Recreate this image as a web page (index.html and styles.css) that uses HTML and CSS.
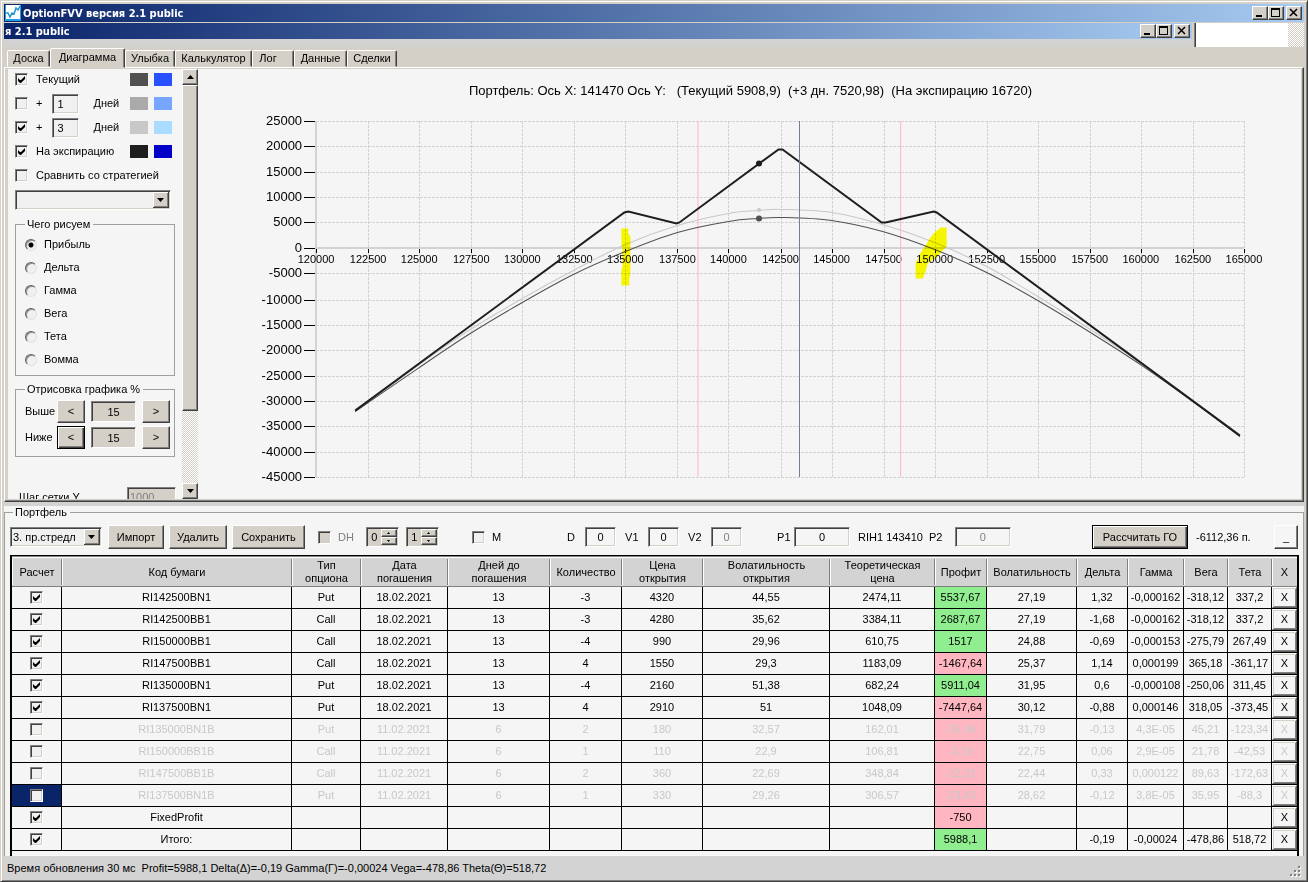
FILE: index.html
```html
<!DOCTYPE html>
<html lang="ru">
<head>
    <meta charset="UTF-8">
    <meta name="viewport" content="width=device-width, initial-scale=1.0">
    <title>OptionFVV версия 2.1 public</title>
    <link rel="stylesheet" href="styles.css">
</head>
<body>
    <div class="window">
        <header class="title-bar">
            <svg class="app-icon" width="16" height="16" viewBox="0 0 16 16">
                <rect width="16" height="16" fill="#1ea0e6"/>
                <rect x="1" y="0" width="14" height="14" fill="#fff"/>
                <path d="M1 8h2l2 4 2-4 2 1 2-6 2 2 2-4" fill="none" stroke="#1e96d2" stroke-width="1.5"/>
            </svg>
            <h1 class="title">OptionFVV версия 2.1 public</h1>
            <div class="win-buttons">
                <button class="win-btn" aria-label="Свернуть"><svg width="12" height="10" viewBox="0 0 12 10"><path d="M2 7h6v2H2z"/></svg></button>
                <button class="win-btn" aria-label="Развернуть"><svg width="12" height="10" viewBox="0 0 12 10"><path d="M1 0h9v9H1zM2 2v6h7V2z" fill-rule="evenodd"/></svg></button>
                <button class="win-btn close" aria-label="Закрыть"><svg width="12" height="10" viewBox="0 0 12 10"><path d="M2 1l7 7M9 1L2 8" stroke="#000" stroke-width="1.5"/></svg></button>
            </div>
        </header>

        <div class="back-window">
            <div class="back-left">
                <div class="title-bar small">
                    <span class="title">я 2.1 public</span>
                    <div class="win-buttons">
                        <button class="win-btn" aria-label="Свернуть"><svg width="12" height="10" viewBox="0 0 12 10"><path d="M2 7h6v2H2z"/></svg></button>
                        <button class="win-btn" aria-label="Развернуть"><svg width="12" height="10" viewBox="0 0 12 10"><path d="M1 0h9v9H1zM2 2v6h7V2z" fill-rule="evenodd"/></svg></button>
                        <button class="win-btn close" aria-label="Закрыть"><svg width="12" height="10" viewBox="0 0 12 10"><path d="M2 1l7 7M9 1L2 8" stroke="#000" stroke-width="1.5"/></svg></button>
                    </div>
                </div>
            </div>
            <div class="back-edge"></div>
            <div class="back-page"></div>
            <div class="back-scroll hatch"></div>
        </div>

        <nav class="tabs">
            <button class="tab tab-board">Доска</button>
            <button class="tab tab-chart active">Диаграмма</button>
            <button class="tab tab-smile">Улыбка</button>
            <button class="tab tab-calc">Калькулятор</button>
            <button class="tab tab-log">Лог</button>
            <button class="tab tab-data">Данные</button>
            <button class="tab tab-deals">Сделки</button>
        </nav>

        <main class="tab-page">
            <aside class="settings">
                <div class="lines">
                    <div class="line">
                        <input type="checkbox" id="showNow" checked>
                        <label class="grow" for="showNow">Текущий</label>
                        <span class="swatch now-1"></span><span class="swatch now-2"></span>
                    </div>
                    <div class="line">
                        <input type="checkbox" id="showPlus1">
                        <label for="showPlus1">+</label>
                        <input class="edit days" type="text" id="plus1" value="1">
                        <label class="grow" for="plus1">Дней</label>
                        <span class="swatch one-1"></span><span class="swatch one-2"></span>
                    </div>
                    <div class="line">
                        <input type="checkbox" id="showPlus3" checked>
                        <label for="showPlus3">+</label>
                        <input class="edit days" type="text" id="plus3" value="3">
                        <label class="grow" for="plus3">Дней</label>
                        <span class="swatch three-1"></span><span class="swatch three-2"></span>
                    </div>
                    <div class="line">
                        <input type="checkbox" id="showExp" checked>
                        <label class="grow" for="showExp">На экспирацию</label>
                        <span class="swatch exp-1"></span><span class="swatch exp-2"></span>
                    </div>
                    <div class="line">
                        <input type="checkbox" id="compare">
                        <label for="compare">Сравнить со стратегией</label>
                    </div>
                    <select class="combo" aria-label="Стратегия"><option></option></select>
                </div>

                <fieldset class="group kinds">
                    <legend>Чего рисуем</legend>
                    <label class="kind"><input type="radio" name="kind" checked>Прибыль</label>
                    <label class="kind"><input type="radio" name="kind">Дельта</label>
                    <label class="kind"><input type="radio" name="kind">Гамма</label>
                    <label class="kind"><input type="radio" name="kind">Вега</label>
                    <label class="kind"><input type="radio" name="kind">Тета</label>
                    <label class="kind"><input type="radio" name="kind">Вомма</label>
                </fieldset>

                <fieldset class="group range">
                    <legend>Отрисовка графика %</legend>
                    <div class="range-row">
                        <label for="above">Выше</label>
                        <button class="btn">&lt;</button>
                        <input class="edit grey" type="text" id="above" value="15">
                        <button class="btn">&gt;</button>
                    </div>
                    <div class="range-row">
                        <label for="below">Ниже</label>
                        <button class="btn default">&lt;</button>
                        <input class="edit grey" type="text" id="below" value="15">
                        <button class="btn">&gt;</button>
                    </div>
                </fieldset>

                <div class="grid-step">
                    <label for="stepY">Шаг сетки Y</label>
                    <input class="edit grey" type="text" id="stepY" value="1000" disabled>
                </div>
            </aside>
            <div class="scroll hatch">
                <button class="btn scroll-btn" aria-label="Вверх"><svg width="7" height="4" viewBox="0 0 7 4"><path d="M0 4h7L3.5 0z"/></svg></button>
                <div class="thumb"></div>
                <div class="track"></div>
                <button class="btn scroll-btn" aria-label="Вниз"><svg width="7" height="4" viewBox="0 0 7 4"><path d="M0 0h7L3.5 4z"/></svg></button>
            </div>
            <div class="chart-box">
                <svg class="chart" id="chart" viewBox="0 0 1102 429"></svg>
            </div>
        </main>

        <section class="portfolio">
            <fieldset class="group portfolio-group">
                <legend>Портфель</legend>
                <div class="toolbar">
                    <select class="combo strategy" aria-label="Портфель"><option>3. пр.стредл</option></select>
                    <button class="btn import">Импорт</button>
                    <button class="btn remove">Удалить</button>
                    <button class="btn save">Сохранить</button>
                    <label class="tick dh"><input class="grey" type="checkbox" disabled>DH</label>
                    <span class="edit grey spin">
                        <input type="text" value="0" aria-label="DH 1">
                        <span class="spin-buttons">
                            <button class="btn" aria-label="Больше"><svg width="3" height="2" viewBox="0 0 3 2"><path d="M0 2h3L1.5 0z"/></svg></button>
                            <button class="btn" aria-label="Меньше"><svg width="3" height="2" viewBox="0 0 3 2"><path d="M0 0h3L1.5 2z"/></svg></button>
                        </span>
                    </span>
                    <span class="edit grey spin">
                        <input type="text" value="1" aria-label="DH 2">
                        <span class="spin-buttons">
                            <button class="btn" aria-label="Больше"><svg width="3" height="2" viewBox="0 0 3 2"><path d="M0 2h3L1.5 0z"/></svg></button>
                            <button class="btn" aria-label="Меньше"><svg width="3" height="2" viewBox="0 0 3 2"><path d="M0 0h3L1.5 2z"/></svg></button>
                        </span>
                    </span>
                    <label class="tick m"><input type="checkbox">M</label>
                    <label class="field-label first" for="fieldD">D</label>
                    <input class="edit num" type="text" id="fieldD" value="0">
                    <label class="field-label" for="fieldV1">V1</label>
                    <input class="edit num" type="text" id="fieldV1" value="0">
                    <label class="field-label" for="fieldV2">V2</label>
                    <input class="edit num" type="text" id="fieldV2" value="0" disabled>
                    <label class="field-label p1" for="fieldP1">P1</label>
                    <input class="edit num wide" type="text" id="fieldP1" value="0">
                    <span class="ticker">RIH1 143410</span>
                    <label class="field-label p2" for="fieldP2">P2</label>
                    <input class="edit num wide" type="text" id="fieldP2" value="0" disabled>
                    <button class="btn default calc">Рассчитать ГО</button>
                    <span class="margin-sum">-6112,36 п.</span>
                    <button class="btn light collapse">_</button>
                </div>

                <div class="grid">
                    <table>
                        <colgroup>
                            <col class="c-check"><col class="c-code"><col class="c-type"><col class="c-date">
                            <col class="c-days"><col class="c-qty"><col class="c-open"><col class="c-vopen">
                            <col class="c-theor"><col class="c-profit"><col class="c-vol"><col class="c-delta">
                            <col class="c-gamma"><col class="c-vega"><col class="c-theta"><col class="c-del">
                        </colgroup>
                        <thead>
                            <tr>
                                <th>Расчет</th>
                                <th>Код бумаги</th>
                                <th>Тип опциона</th>
                                <th>Дата погашения</th>
                                <th>Дней до погашения</th>
                                <th>Количество</th>
                                <th>Цена открытия</th>
                                <th>Волатильность открытия</th>
                                <th>Теоретическая цена</th>
                                <th>Профит</th>
                                <th>Волатильность</th>
                                <th>Дельта</th>
                                <th>Гамма</th>
                                <th>Вега</th>
                                <th>Тета</th>
                                <th>X</th>
                            </tr>
                        </thead>
                        <tbody id="positions"></tbody>
                    </table>
                </div>
            </fieldset>
        </section>

        <footer class="status">
            <span>Время обновления 30 мс&nbsp; Profit=5988,1 Delta(Δ)=-0,19 Gamma(Г)=-0,00024 Vega=-478,86 Theta(Θ)=518,72</span>
            <svg class="grip" width="12" height="12" viewBox="0 0 12 12">
                <path fill="#fff" d="M9 1h2v2H9zM5 5h2v2H5zM9 5h2v2H9zM1 9h2v2H1zM5 9h2v2H5zM9 9h2v2H9z"/>
                <path fill="#808080" d="M8 0h2v2H8zM4 4h2v2H4zM8 4h2v2H8zM0 8h2v2H0zM4 8h2v2H4zM8 8h2v2H8z"/>
            </svg>
        </footer>
    </div>

    <script src="script.js"></script>
</body>
</html>
```

FILE: styles.css
```css
* {
    box-sizing: border-box;
}
body {
    margin: 0;
    font-family: "Liberation Sans", Arial, sans-serif;
    font-size: 11px;
    line-height: 13px;
    color: #000;
    background-color: #d4d0c8;
}
button, input, select {
    margin: 0;
    padding: 0;
    font: inherit;
    color: inherit;
    border-radius: 0;
}
.window {
    display: flex;
    flex-direction: column;
    min-height: 100vh;
    padding: 3px 3px 1px;
    border: 1px solid;
    border-color: #d4d0c8 #404040 #404040 #d4d0c8;
    box-shadow: inset 1px 1px #fff, inset -1px -1px #808080;
}

/* title bars */
.title-bar {
    display: flex;
    align-items: center;
    height: 18px;
    padding: 0 2px 0 1px;
    background: linear-gradient(to right, #0a246a, #a6caf0);
    color: #fff;
}
.title-bar.small {
    height: 16px;
    padding-left: 0;
}
.title {
    flex: 1;
    margin: 0 0 0 2px;
    font-size: 11px;
    font-weight: bold;
    font-family: "DejaVu Sans Condensed", "Liberation Sans", sans-serif;
}
.small .title {
    margin-left: 1px;
}
.win-buttons {
    display: flex;
}
.win-btn {
    width: 16px;
    height: 14px;
    line-height: 0;
    background-color: #d4d0c8;
    border: 1px solid;
    border-color: #fff #404040 #404040 #fff;
    box-shadow: inset -1px -1px #808080;
}
.win-btn.close {
    margin-left: 2px;
}

/* strip of the window behind */
.back-window {
    display: flex;
    height: 25px;
    padding-top: 1px;
}
.back-left {
    flex: 1;
    background-color: #d3d3d3;
}
.back-edge {
    width: 4px;
    border-right: 1px solid #404040;
    box-shadow: inset -1px 0 #808080;
}
.back-page {
    width: 92px;
    background-color: #fff;
}
.back-scroll {
    width: 16px;
}
.hatch {
    background: repeating-conic-gradient(#fff 0 25%, #d4d0c8 0 50%) 0 0 / 2px 2px;
}

/* tabs */
.tabs {
    display: flex;
    align-items: flex-end;
    height: 20px;
    padding: 1px 0 0 3px;
}
.tab {
    height: 17px;
    background-color: #d4d0c8;
    border: 1px solid;
    border-color: #fff #404040 transparent #fff;
    border-radius: 2px 2px 0 0;
    box-shadow: inset -1px 0 #808080;
    white-space: nowrap;
}
.tab.active {
    height: 20px;
    margin-bottom: -1px;
    padding-bottom: 2px;
    z-index: 1;
}
.tab-board { width: 43px; }
.tab-chart { width: 75px; }
.tab-smile { width: 50px; }
.tab-calc { width: 77px; }
.tab-log { width: 42px; padding-right: 10px; }
.tab-data { width: 53px; }
.tab-deals { width: 50px; }

.tab-page {
    flex: 1 1 0;
    display: flex;
    min-height: 300px;
    padding: 1px 2px 2px 3px;
    border: 1px solid;
    border-color: #fff #404040 #404040 #fff;
    box-shadow: inset -1px -1px #808080;
    overflow: hidden;
}

/* shared controls */
.edit {
    background-color: #f5f5f5;
    border: 1px solid;
    border-color: #808080 #fff #fff #808080;
    box-shadow: inset 1px 1px #404040, inset -1px -1px #d4d0c8;
}
.edit.grey {
    background-color: #d4d0c8;
    text-align: center;
}
input:disabled {
    color: #808080;
}
.btn {
    background-color: #d4d0c8;
    border: 1px solid;
    border-color: #fff #404040 #404040 #fff;
    box-shadow: inset -1px -1px #808080;
}
.btn.default {
    border-color: #000;
    box-shadow: inset 1px 1px #fff, inset -1px -1px #404040, inset -2px -2px #808080;
}
.btn.light {
    background-color: #f5f5f5;
}
input[type="checkbox"] {
    appearance: none;
    flex: none;
    width: 13px;
    height: 13px;
    background-color: #f0f0f0;
    border: 1px solid;
    border-color: #808080 #fff #fff #808080;
    box-shadow: inset 1px 1px #404040, inset -1px -1px #d4d0c8;
}
input[type="checkbox"]:checked {
    background-image: url("data:image/svg+xml,%3Csvg xmlns='http://www.w3.org/2000/svg' width='11' height='11'%3E%3Cpath d='M2 4v3l2 2h1l4-4V2L5 6H4z'/%3E%3C/svg%3E");
}
input[type="checkbox"].grey {
    background-color: #d4d0c8;
}
input[type="radio"] {
    appearance: none;
    width: 12px;
    height: 12px;
    background-color: #f0f0f0;
    border: 1px solid;
    border-color: #606060 #e4e2de #e4e2de #606060;
    border-radius: 50%;
    box-shadow: inset 1px 1px #909090;
}
input[type="radio"]:checked {
    background-image: radial-gradient(circle, #000 2px, transparent 3px);
}
.combo {
    appearance: none;
    height: 20px;
    padding-left: 2px;
    border: 1px solid;
    border-color: #808080 #fff #fff #808080;
    box-shadow: inset 1px 1px #404040, inset -1px -1px #d4d0c8;
    background: #f0f0f0 url("data:image/svg+xml,%3Csvg xmlns='http://www.w3.org/2000/svg' width='16' height='16'%3E%3Cpath fill='%23404040' d='M0 0h16v16H0z'/%3E%3Cpath fill='%23fff' d='M0 0h15v15H0z'/%3E%3Cpath fill='%23808080' d='M1 1h14v14H1z'/%3E%3Cpath fill='%23d4d0c8' d='M1 1h13v13H1z'/%3E%3Cpath d='M4 6h7l-3.500 4z'/%3E%3C/svg%3E") right 1px center no-repeat;
}
.group {
    min-width: 0;
    margin: 0;
    border: 1px solid #a0a0a0;
}
.group legend {
    padding: 0 3px 0 2px;
    line-height: 12px;
}

/* left settings */
.settings {
    flex: none;
    width: 174px;
    padding: 1px 6px 0 7px;
    background-color: #f5f5f5;
    overflow: hidden;
}
.lines {
    display: flex;
    flex-direction: column;
    gap: 5px;
}
.line {
    display: flex;
    align-items: center;
    height: 19px;
    padding-right: 4px;
}
.line input[type="checkbox"] {
    margin-right: 8px;
}
.line .grow {
    flex: 1;
}
.days {
    width: 27px;
    height: 20px;
    margin: 0 14px 0 10px;
    padding-left: 4px;
    background-color: #f0f0f0;
}
.swatch {
    width: 18px;
    height: 13px;
    margin-left: 6px;
}
.now-1 { background-color: #505050; }
.now-2 { background-color: #2850ff; }
.one-1 { background-color: #aaaaaa; }
.one-2 { background-color: #78a5ff; }
.three-1 { background-color: #c8c8c8; }
.three-2 { background-color: #aadcff; }
.exp-1 { background-color: #1e1e1e; }
.exp-2 { background-color: #0000c8; }
.lines .combo {
    width: 156px;
}
.settings .group {
    width: 160px;
}
.settings .kinds {
    margin-top: 8px;
    padding: 3px 0 4px 9px;
}
.kind {
    display: flex;
    align-items: center;
    gap: 7px;
    height: 23px;
}
.settings .range {
    margin-top: 7px;
    padding: 5px 0 7px 9px;
}
.range-row {
    display: flex;
    align-items: center;
}
.range-row + .range-row {
    margin-top: 3px;
}
.range-row label {
    width: 32px;
}
.range-row .btn {
    width: 28px;
    height: 23px;
}
.range-row .edit {
    width: 45px;
    height: 21px;
    margin: 0 6px;
}
.grid-step {
    display: flex;
    justify-content: space-between;
    align-items: center;
    margin-top: 30px;
    padding-left: 4px;
}
.grid-step .edit {
    width: 49px;
    height: 20px;
    padding-left: 2px;
    text-align: left;
}
.scroll {
    flex: none;
    display: flex;
    flex-direction: column;
    width: 16px;
}
.scroll-btn {
    height: 16px;
    line-height: 0;
}
.thumb {
    flex: 9;
    background-color: #d4d0c8;
    border: 1px solid;
    border-color: #fff #404040 #404040 #fff;
    box-shadow: inset -1px -1px #808080;
}
.track {
    flex: 2;
}

/* chart */
.chart-box {
    flex: 1;
    min-width: 0;
    background-color: #f5f5f5;
}
.chart {
    display: block;
    width: 100%;
    height: 100%;
}
.chart .title-text {
    font-size: 13px;
    text-anchor: middle;
    white-space: pre;
}
.chart .y-label {
    font-size: 13px;
    text-anchor: end;
}
.chart .x-label {
    font-size: 11px;
    text-anchor: middle;
}
.chart .grid-line {
    stroke: #d3d3d3;
    stroke-dasharray: 3 1;
    shape-rendering: crispEdges;
}
.chart .axis {
    stroke: #d3d3d3;
    stroke-width: 2;
    shape-rendering: crispEdges;
}
.chart .tick-mark {
    stroke: #000;
    shape-rendering: crispEdges;
}
.chart .bound {
    stroke: #ffb6c1;
}
.chart .price {
    stroke: #708090;
    shape-rendering: crispEdges;
}
.chart path {
    fill: none;
}
.chart .marker {
    fill: #ff0;
    mix-blend-mode: multiply;
}

/* portfolio */
.portfolio {
    margin-top: 4px;
    background-color: #f5f5f5;
    box-shadow: 0 -4px #d3d3d3;
}
.portfolio-group {
    padding: 0 4px 5px 5px;
    border-bottom: none;
}
.portfolio-group legend {
    margin-left: 3px;
}
.toolbar {
    display: flex;
    align-items: center;
    height: 37px;
    padding: 1px 1px 0 0;
}
.toolbar > * {
    flex: none;
}
.toolbar .btn {
    height: 24px;
}
.strategy {
    width: 92px;
}
.import {
    width: 56px;
    margin-left: 6px;
}
.remove {
    width: 58px;
    margin-left: 5px;
}
.save {
    width: 73px;
    margin-left: 5px;
}
.tick {
    display: flex;
    align-items: center;
    gap: 7px;
}
.dh {
    margin-left: 13px;
    color: #808080;
}
.spin {
    display: flex;
    width: 33px;
    height: 20px;
    margin-left: 7px;
    padding: 1px;
}
.dh + .spin {
    margin-left: 12px;
}
.spin input {
    width: 13px;
    background: none;
    border: none;
    text-align: center;
}
.spin-buttons {
    flex: 1;
    display: flex;
    flex-direction: column;
}
.spin .spin-buttons .btn {
    display: flex;
    align-items: center;
    justify-content: center;
    height: 8px;
}
.m {
    margin-left: 33px;
}
.field-label {
    width: 23px;
    margin-left: 9px;
}
.field-label.first {
    width: 18px;
    margin-left: 66px;
}
.field-label.p1 {
    width: 17px;
    margin-left: 35px;
}
.field-label.p2 {
    width: 26px;
    margin-left: 6px;
}
.num {
    width: 31px;
    height: 20px;
    text-align: center;
}
.num.wide {
    width: 56px;
}
.ticker {
    margin-left: 8px;
}
.calc {
    width: 96px;
    margin-left: auto;
}
.margin-sum {
    width: 86px;
    padding-left: 8px;
}
.collapse {
    width: 24px;
}

/* positions table */
.grid {
    border: solid #000;
    border-width: 1px 2px 0;
    padding-bottom: 5px;
    margin-bottom: -5px;
}
table {
    width: 100%;
    table-layout: fixed;
    border-spacing: 0;
    border-top: 1px solid #808080;
}
.c-check { width: 50px; }
.c-type { width: 69px; }
.c-date { width: 87px; }
.c-days { width: 102px; }
.c-qty { width: 72px; }
.c-open { width: 81px; }
.c-vopen { width: 127px; }
.c-theor { width: 105px; }
.c-profit { width: 52px; }
.c-vol { width: 90px; }
.c-delta { width: 51px; }
.c-gamma { width: 56px; }
.c-vega { width: 44px; }
.c-theta { width: 44px; }
.c-del { width: 25px; }
th {
    height: 30px;
    padding: 0 6px;
    font-weight: normal;
    background:
        linear-gradient(#fff, #fff) left center / 1px 26px no-repeat,
        linear-gradient(#808080, #808080) right center / 1px 26px no-repeat,
        #d3d3d3;
    border-top: 1px solid #fff;
    border-bottom: 1px solid #808080;
}
th:nth-child(1), th:nth-child(6), th:nth-child(n+10) {
    padding: 0;
}
th:last-child {
    background: linear-gradient(#fff, #fff) left center / 1px 26px no-repeat, #d3d3d3;
}
td {
    height: 22px;
    padding: 0;
    text-align: center;
    white-space: nowrap;
    border-right: 1px solid #000;
    border-bottom: 1px solid #000;
}
td input[type="checkbox"] {
    display: block;
    margin: 0 auto;
}
td .btn {
    display: block;
    width: 100%;
    height: 21px;
    background-color: #f5f5f5;
    border-color: #fff #606060 #606060 #fff;
    box-shadow: inset 1px 1px #d4d0c8, inset -1px -1px #808080;
}
td:last-child {
    border-right: none;
}
.off {
    color: #c8c8c8;
}
.plus {
    background-color: #90ee90;
}
.minus {
    background-color: #ffb6c1;
}
.selected {
    background-color: #0a246a;
}

.status {
    display: flex;
    align-items: center;
    justify-content: space-between;
    height: 24px;
    padding: 0 2px 0 3px;
    background-color: #d3d3d3;
    z-index: 1;
}
.grip {
    align-self: flex-end;
    margin-bottom: 2px;
}
```

FILE: script.js
```js
// Positions: on, code, type, date, days, qty, open, vol open, theor, profit, vol, delta, gamma, vega, theta
const positions = [
    [1, 'RI142500BN1', 'Put', '18.02.2021', '13', '-3', '4320', '44,55', '2474,11', '5537,67', '27,19', '1,32', '-0,000162', '-318,12', '337,2'],
    [1, 'RI142500BB1', 'Call', '18.02.2021', '13', '-3', '4280', '35,62', '3384,11', '2687,67', '27,19', '-1,68', '-0,000162', '-318,12', '337,2'],
    [1, 'RI150000BB1', 'Call', '18.02.2021', '13', '-4', '990', '29,96', '610,75', '1517', '24,88', '-0,69', '-0,000153', '-275,79', '267,49'],
    [1, 'RI147500BB1', 'Call', '18.02.2021', '13', '4', '1550', '29,3', '1183,09', '-1467,64', '25,37', '1,14', '0,000199', '365,18', '-361,17'],
    [1, 'RI135000BN1', 'Put', '18.02.2021', '13', '-4', '2160', '51,38', '682,24', '5911,04', '31,95', '0,6', '-0,000108', '-250,06', '311,45'],
    [1, 'RI137500BN1', 'Put', '18.02.2021', '13', '4', '2910', '51', '1048,09', '-7447,64', '30,12', '-0,88', '0,000146', '318,05', '-373,45'],
    [0, 'RI135000BN1B', 'Put', '11.02.2021', '6', '2', '180', '32,57', '162,01', '-35,98', '31,79', '-0,13', '4,3E-05', '45,21', '-123,34'],
    [0, 'RI150000BB1B', 'Call', '11.02.2021', '6', '1', '110', '22,9', '106,81', '-3,19', '22,75', '0,06', '2,9E-05', '21,78', '-42,53'],
    [0, 'RI147500BB1B', 'Call', '11.02.2021', '6', '2', '360', '22,69', '348,84', '-22,32', '22,44', '0,33', '0,000122', '89,63', '-172,63'],
    [0, 'RI137500BN1B', 'Put', '11.02.2021', '6', '1', '330', '29,26', '306,57', '-23,43', '28,62', '-0,12', '3,8E-05', '35,95', '-88,3'],
    [1, 'FixedProfit', '', '', '', '', '', '', '', '-750', '', '', '', '', ''],
    [1, 'Итого:', '', '', '', '', '', '', '', '5988,1', '', '-0,19', '-0,00024', '-478,86', '518,72']
];
const selectedRow = 9;
const profitColumn = 9;

function loadPositions() {
    let html = '';
    positions.forEach((item, n) => {
        const on = item[0];
        html += `<tr class="${on ? '' : 'off'}">`;
        html += `<td class="${n === selectedRow ? 'selected' : ''}"><input type="checkbox" aria-label="${item[1]}" ${on ? 'checked' : ''}></td>`;
        for (let i = 1; i < item.length; i++) {
            let cls = '';
            if (i === profitColumn) {
                cls = item[i].startsWith('-') ? 'minus' : 'plus';
            }
            html += `<td class="${cls}">${item[i]}</td>`;
        }
        html += '<td><button class="btn">X</button></td></tr>';
    });
    document.getElementById('positions').innerHTML = html;
}

// Plot area
const left = 118, right = 1045, top0 = 52, bottom = 407;
const px = v => Math.round(left + (v - 120000) * (right - left) / 45000);
const py = v => Math.round(top0 + (25000 - v) * (bottom - top0) / 70000);

const nowLine = [[157, 342], [221, 298], [272, 264], [324, 233], [375, 205], [427, 182], [479, 163], [530, 152], [560, 149], [583, 148],
    [633, 151], [684, 162], [736, 180], [788, 203], [839, 231], [890, 262], [943, 296], [994, 332], [1041, 367]];
const plusLine = [[157, 342], [221, 295], [272, 260], [324, 229], [375, 201], [427, 175], [479, 156], [530, 144], [560, 141], [583, 140],
    [633, 143], [684, 155], [736, 173], [788, 197], [839, 227], [890, 259], [943, 294], [994, 331], [1041, 367]];
const expLine = [[157, 341], [426, 143], [430, 142], [478, 154], [481, 153], [580, 80], [584, 80], [683, 153], [687, 153], [735, 142], [738, 143], [1041, 366]];

// Smooth line through the points
function curve(p) {
    let d = `M${p[0]}`;
    for (let i = 0; i < p.length - 1; i++) {
        const a = p[i - 1] || p[i], b = p[i], c = p[i + 1], e = p[i + 2] || c;
        d += `C${b[0] + (c[0] - a[0]) / 6} ${b[1] + (c[1] - a[1]) / 6} ${c[0] - (e[0] - b[0]) / 6} ${c[1] - (e[1] - b[1]) / 6} ${c}`;
    }
    return d;
}

function line(cls, x1, y1, x2, y2) {
    return `<line class="${cls}" x1="${x1}" y1="${y1}" x2="${x2}" y2="${y2}"/>`;
}

function drawChart() {
    let s = '<text class="title-text" x="552" y="26">Портфель: Ось X: 141470 Ось Y:   (Текущий 5908,9)  (+3 дн. 7520,98)  (На экспирацию 16720)</text>';
    for (let v = 25000; v >= -45000; v -= 5000) {
        const y = py(v) + 0.5;
        s += line('grid-line', left, y, right, y);
        s += line('tick-mark', 106, y, 117, y);
        s += `<text class="y-label" x="104" y="${py(v) + 4}">${v}</text>`;
    }
    for (let v = 120000; v <= 165000; v += 2500) {
        const x = px(v) + 0.5;
        s += line('grid-line', x, top0, x, bottom);
    }
    s += line('axis', left, top0, left, bottom);
    s += line('axis', left, py(0), right, py(0));
    for (let v = 120000; v <= 165000; v += 2500) {
        const x = px(v);
        s += line('tick-mark', x + 0.5, py(0) + 1, x + 0.5, py(0) + 5);
        s += `<text class="x-label" x="${x}" y="194">${v}</text>`;
    }
    s += line('bound', 499.5, top0, 499.5, bottom);
    s += line('bound', 702, top0, 702, bottom);
    s += `<path d="${curve(plusLine)}" stroke="#c8c8c8"/>`;
    s += `<path d="${curve(nowLine)}" stroke="#505050"/>`;
    s += `<path d="M${expLine.join('L')}" stroke="#1e1e1e" stroke-width="2"/>`;
    s += line('price', 600.5, top0, 600.5, bottom);
    s += '<circle cx="560.5" cy="94" r="3" fill="#1e1e1e"/>';
    s += '<circle cx="560.5" cy="140.5" r="2" fill="#c8c8c8"/>';
    s += '<circle cx="560.5" cy="149" r="3" fill="#505050"/>';
    s += '<polygon class="marker" points="423,159 430,159 430,164 432,167 432,204 431,208 431,216 423,216 423,200 424,198 424,178 423,175"/>';
    s += '<polygon class="marker" points="742,158 748,158 748,177 743,182 739,187 734,190 729,194 727,202 724,209 717,209 717,193 719,190 722,183 727,176 731,169 735,164"/>';
    document.getElementById('chart').innerHTML = s;
}

loadPositions();
drawChart();
```
